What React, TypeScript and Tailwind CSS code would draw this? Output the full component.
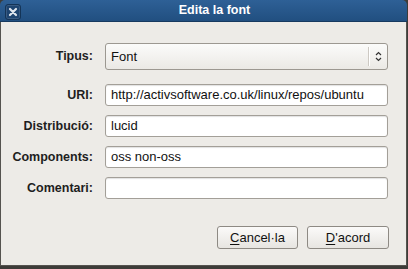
import React from "react";

const font = { fontFamily: '"Liberation Sans", Arial, sans-serif' };

function Label({ children }: { children: React.ReactNode }) {
  return (
    <div className="flex items-center justify-end text-[12.5px] font-bold text-[#1e1e1e]">
      {children}
    </div>
  );
}

function Field({ value }: { value: string }) {
  return (
    <div className="h-[22px] rounded-[3px] border border-[#a39f98] bg-white shadow-[inset_0_1px_1px_rgba(0,0,0,0.12)] flex items-center pl-[5px] text-[13px] text-[#111]">
      {value}
    </div>
  );
}

export default function App() {
  return (
    <div className="w-[408px] h-[269px] bg-[#3d3c38]" style={font}>
      <div className="w-[407px] h-[266px] flex flex-col">
        {/* title bar */}
        <div className="relative h-[22px] rounded-t-[5px] bg-gradient-to-b from-[#2e6096] to-[#214f80] border-b border-[#173a60] flex items-center">
          <div className="absolute left-[5px] top-[4px] w-[16px] h-[16px] rounded-[3px] bg-[#1d4470] border border-[#143457] shadow-[inset_0_0_0_1px_rgba(255,255,255,0.12)] flex items-center justify-center">
            <svg width="10" height="10" viewBox="0 0 10 10">
              <path d="M2 2 L8 8 M8 2 L2 8" stroke="#dfe6ee" strokeWidth="2.2" strokeLinecap="round" />
            </svg>
          </div>
          <div className="flex-1 pl-[22px] text-center text-[12.5px] font-bold text-white">
            Edita la font
          </div>
        </div>
        {/* body */}
        <div className="flex-1 bg-[#edebe7] border-l border-r border-b border-[#55534f] pt-[21px] pr-[18px] flex flex-col">
          <div className="grid grid-cols-[92px_1fr] gap-x-[12px]">
            <Label>Tipus:</Label>
            <div className="h-[27px] rounded-[3px] border border-[#9c9891] bg-gradient-to-b from-[#fbfbfa] to-[#ebe9e5] flex items-center text-[13px] text-[#111]">
              <span className="flex-1 pl-[5px]">Font</span>
              <div className="h-[19px] w-px bg-[#cdc9c3] shadow-[1px_0_0_#fff]" />
              <div className="w-[18px] flex items-center justify-center">
                <svg width="7" height="11" viewBox="0 0 7 11">
                  <path d="M1 4 L3.5 1.5 L6 4 M1 7 L3.5 9.5 L6 7" stroke="#333" strokeWidth="1.2" fill="none" />
                </svg>
              </div>
            </div>
          </div>
          <div className="mt-[14px] grid grid-cols-[92px_1fr] gap-x-[12px] gap-y-[9px]">
            <Label>URI:</Label>
            <Field value="http://activsoftware.co.uk/linux/repos/ubuntu" />
            <Label>Distribució:</Label>
            <Field value="lucid" />
            <Label>Components:</Label>
            <Field value="oss non-oss" />
            <Label>Comentari:</Label>
            <Field value="" />
          </div>
          <div className="mt-[27px] flex justify-end gap-[9px] mr-[-1px]">
            <button className="w-[81px] h-[23px] rounded-[3px] border border-[#8e8a84] bg-gradient-to-b from-[#fbfaf9] to-[#e7e5e1] text-[13px] text-[#111] flex items-center justify-center">
              <span className="underline underline-offset-2">C</span>ancel·la
            </button>
            <button className="w-[82px] h-[23px] rounded-[3px] border border-[#8e8a84] bg-gradient-to-b from-[#fbfaf9] to-[#e7e5e1] text-[13px] text-[#111] flex items-center justify-center">
              <span className="underline underline-offset-2">D</span>'acord
            </button>
          </div>
        </div>
      </div>
    </div>
  );
}
